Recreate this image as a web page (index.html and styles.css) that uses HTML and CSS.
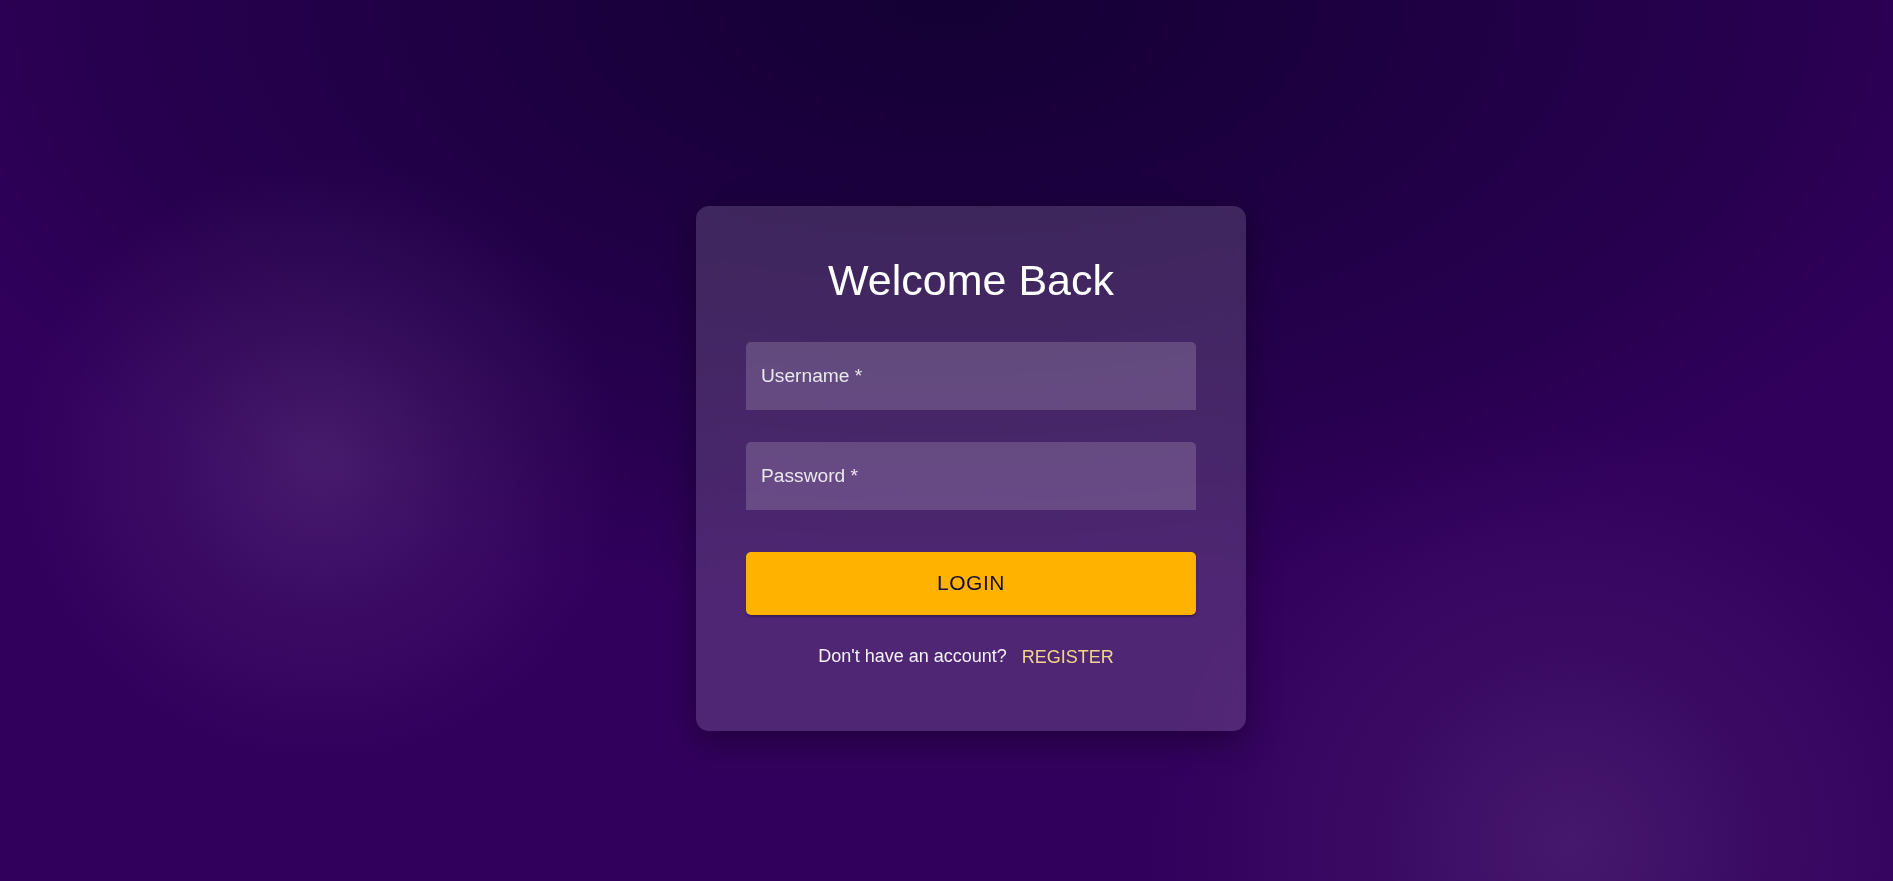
FILE: index.html
```html
<!DOCTYPE html>
<html lang="en">
<head>
<meta charset="utf-8">
<title>Login</title>
<link rel="stylesheet" href="styles.css">
</head>
<body>
<main class="page">
  <form class="card">
    <h1 class="title">Welcome Back</h1>
    <div class="field"><label class="field-label">Username *</label></div>
    <div class="field field-second"><label class="field-label">Password *</label></div>
    <button type="button" class="login-btn">LOGIN</button>
    <div class="footer-row">
      <span class="footer-text">Don't have an account?</span>
      <a class="register-link">REGISTER</a>
    </div>
  </form>
</main>
</body>
</html>
```
FILE: styles.css
```css
html, body {
  margin: 0;
  padding: 0;
  height: 100%;
}
body {
  font-family: "Liberation Sans", Arial, sans-serif;
  background-color: #2a0052;
  background-image:
    radial-gradient(circle at 17% 52%, rgba(110, 70, 140, 0.38) 0, rgba(110, 70, 140, 0.18) 140px, rgba(110, 70, 140, 0) 300px),
    radial-gradient(circle at 83% 96%, rgba(110, 70, 140, 0.34) 0, rgba(110, 70, 140, 0.15) 200px, rgba(110, 70, 140, 0) 420px),
    radial-gradient(ellipse 60% 70% at 50% 0%, #140034 0%, #1c0040 35%, #280050 75%, #31005c 100%);
  overflow: hidden;
}
.page {
  box-sizing: border-box;
  height: 100vh;
  display: flex;
  align-items: center;
  justify-content: center;
  padding: 55px 0 0 49px;
}
.card {
  width: 550px;
  box-sizing: border-box;
  padding: 48px 50px 48px;
  border-radius: 13px;
  background: rgba(255, 255, 255, 0.15);
  backdrop-filter: blur(10px);
  box-shadow: 0 10px 32px rgba(0, 0, 0, 0.35);
  display: flex;
  flex-direction: column;
}
.title {
  margin: 0 0 35px;
  font-size: 43px;
  line-height: 53px;
  font-weight: 400;
  color: #ffffff;
  text-align: center;
}
.field {
  height: 68px;
  display: flex;
  align-items: center;
  padding-left: 15px;
  background: rgba(255, 255, 255, 0.17);
  border-radius: 5px 5px 0 0;
}
.field-second {
  margin-top: 32px;
}
.field-label {
  font-size: 19.2px;
  color: rgba(255, 255, 255, 0.87);
}
.login-btn {
  margin-top: 42px;
  height: 63px;
  border: none;
  border-radius: 5px;
  background: #ffb300;
  color: #1a0b2e;
  font-family: "Liberation Sans", Arial, sans-serif;
  font-size: 21px;
  letter-spacing: 0.5px;
  box-shadow: 0 3px 2px -2px rgba(0, 0, 0, 0.25), 0 2px 3px rgba(0, 0, 0, 0.18);
  cursor: pointer;
}
.footer-row {
  margin-top: 28px;
  margin-bottom: 13px;
  display: flex;
  justify-content: center;
  align-items: baseline;
  gap: 5px;
  font-size: 18px;
  line-height: 27px;
}
.footer-text {
  color: #f4f1f8;
}
.register-link {
  color: #f3d689;
  padding: 0 10px;
  position: relative;
  top: 1.5px;
  cursor: pointer;
}
```
